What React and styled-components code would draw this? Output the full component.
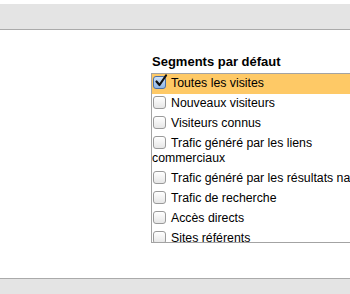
import React from "react";
import styled, { createGlobalStyle } from "styled-components";

const GlobalStyle = createGlobalStyle`
  body {
    margin: 0;
    background: #fff;
    font-family: "Liberation Sans", Arial, Helvetica, sans-serif;
    color: #000;
    overflow: hidden;
  }
`;

const Page = styled.div`
  height: 294px;
  display: flex;
  flex-direction: column;
`;

const Bar = styled.div`
  background: #e4e4e4;
  height: ${(p) => p.$height}px;
  border-${(p) => p.$edge}: 1px solid #aaaaaa;
  margin-top: ${(p) => p.$top || 0}px;
`;

const Content = styled.div`
  flex: 1;
  padding: 24px 0 0 151px;
`;

const Heading = styled.h3`
  margin: 0 0 3px 1px;
  font-size: 13px;
  line-height: 16px;
  font-weight: bold;
`;

const List = styled.div`
  width: 260px;
  height: 168px;
  border: 1px solid #a3a3a3;
  overflow: hidden;
`;

const Row = styled.label`
  display: block;
  padding: 2px 0 3px;
  font-size: 12.3px;
  line-height: 15px;
  white-space: nowrap;
  background: ${(p) => (p.$selected ? "#fec966" : "transparent")};
`;

const Box = styled.span`
  display: inline-block;
  box-sizing: border-box;
  width: 13px;
  height: 13px;
  margin: 0 5px 0 1px;
  vertical-align: -2px;
  border-radius: 3px;
  border: 1px solid ${(p) => (p.$checked ? "#4a6fa8" : "#9a9a9a")};
  background: ${(p) =>
    p.$checked
      ? "linear-gradient(#cfe1f7, #8fb6e6)"
      : "linear-gradient(#ffffff, #e6e6e6)"};
  position: relative;
`;

const Tick = styled.svg`
  position: absolute;
  left: 0px;
  top: -3px;
`;

function Checkbox({ checked }) {
  return (
    <Box $checked={checked}>
      {checked && (
        <Tick width="14" height="14" viewBox="0 0 14 14">
          <path d="M2.5 7.5 L5.5 11 L12 1.5" fill="none" stroke="#111" strokeWidth="2.2" strokeLinecap="round" strokeLinejoin="round" />
        </Tick>
      )}
    </Box>
  );
}

const segments = [
  { label: "Toutes les visites", checked: true },
  { label: "Nouveaux visiteurs" },
  { label: "Visiteurs connus" },
  { label: "Trafic généré par les liens", more: "commerciaux" },
  { label: "Trafic généré par les résultats naturels" },
  { label: "Trafic de recherche" },
  { label: "Accès directs" },
  { label: "Sites référents" },
];

export default function App() {
  return (
    <Page>
      <GlobalStyle />
      <Bar $height={25} $edge="bottom" $top={4} />
      <Content>
        <Heading>Segments par défaut</Heading>
        <List>
          {segments.map((s) => (
            <Row key={s.label} $selected={s.checked}>
              <Checkbox checked={s.checked} />
              {s.label}
              {s.more && (
                <>
                  <br />
                  {s.more}
                </>
              )}
            </Row>
          ))}
        </List>
      </Content>
      <Bar $height={15} $edge="top" />
    </Page>
  );
}
